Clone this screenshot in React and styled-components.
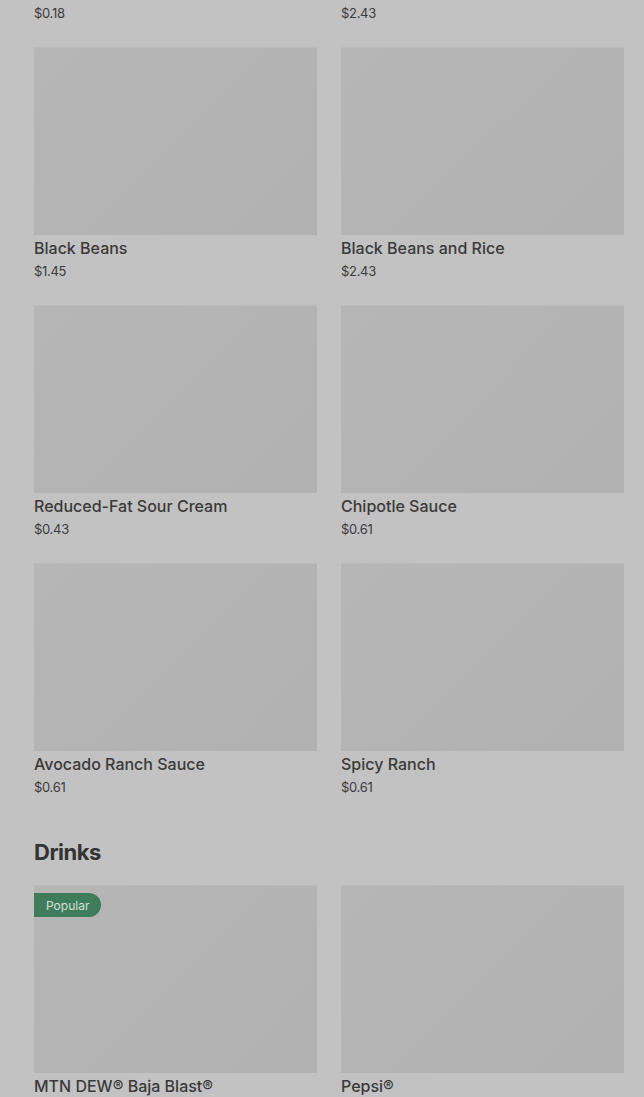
import React from 'react'
import styled, { createGlobalStyle } from 'styled-components'

const Global = createGlobalStyle`
  html, body {
    margin: 0;
    background: #c2c2c2;
    overflow: hidden;
  }
  body {
    font-family: Inter, "Noto Sans", "Liberation Sans", sans-serif;
  }
`

const Page = styled.div`
  height: 1097px;
  overflow: hidden;
  background: #c2c2c2;
`

const Content = styled.div`
  margin-top: -211px;
  padding: 0 20px 0 34px;
`

const Grid = styled.div`
  display: grid;
  grid-template-columns: 283px 283px;
  column-gap: 24px;
  row-gap: 25px;
`

const Item = styled.div`
  display: flex;
  flex-direction: column;
`

const Thumb = styled.div`
  position: relative;
  height: 188px;
  background: linear-gradient(135deg, #b6b6b6 0%, #b3b3b3 60%, #b2b2b2 100%);
  box-shadow: inset 0 1px 0 #bbbbbb;
`

const Badge = styled.span`
  position: absolute;
  top: 8px;
  left: 0;
  height: 24px;
  padding: 0 12px;
  display: flex;
  align-items: center;
  background: #3f7c5c;
  color: #d3e2d7;
  font-size: 12px;
  border-radius: 0 12px 12px 0;
`

const Name = styled.div`
  margin-top: 3px;
  font-size: 16px;
  line-height: 20px;
  font-weight: 500;
  color: #3a3a3a;
  white-space: nowrap;
`

const Price = styled.div`
  margin-top: 4px;
  font-size: 13px;
  line-height: 18px;
  color: #3c3c3c;
  letter-spacing: -0.3px;
`

const Heading = styled.h2`
  margin: 42px 0 19px;
  font-size: 22px;
  line-height: 28px;
  font-weight: 700;
  letter-spacing: -0.5px;
  color: #333;
`

const sides = [
  { name: 'Jalapeños', price: '$0.18' },
  { name: 'Pinto Beans and Rice', price: '$2.43' },
  { name: 'Black Beans', price: '$1.45' },
  { name: 'Black Beans and Rice', price: '$2.43' },
  { name: 'Reduced-Fat Sour Cream', price: '$0.43' },
  { name: 'Chipotle Sauce', price: '$0.61' },
  { name: 'Avocado Ranch Sauce', price: '$0.61' },
  { name: 'Spicy Ranch', price: '$0.61' },
]

const drinks = [
  { name: 'MTN DEW® Baja Blast®', price: '$2.79', popular: true },
  { name: 'Pepsi®', price: '$2.79' },
]

const MenuItem = ({ item }) => (
  <Item>
    <Thumb>{item.popular && <Badge>Popular</Badge>}</Thumb>
    <Name>{item.name}</Name>
    <Price>{item.price}</Price>
  </Item>
)

export default function App() {
  return (
    <Page>
      <Global />
      <Content>
        <Grid>
          {sides.map((s) => <MenuItem key={s.name} item={s} />)}
        </Grid>
        <Heading>Drinks</Heading>
        <Grid>
          {drinks.map((d) => <MenuItem key={d.name} item={d} />)}
        </Grid>
      </Content>
    </Page>
  )
}
